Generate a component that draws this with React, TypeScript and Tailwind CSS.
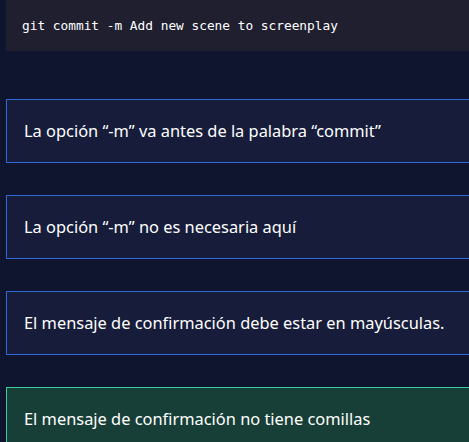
const OPTIONS = [
  { text: 'La opción “-m” va antes de la palabra “commit”', correct: false },
  { text: 'La opción “-m” no es necesaria aquí', correct: false },
  { text: 'El mensaje de confirmación debe estar en mayúsculas.', correct: false },
  { text: 'El mensaje de confirmación no tiene comillas', correct: true },
];

export default function App() {
  return (
    <div className="min-h-screen w-full overflow-hidden bg-[#10152f] pl-[6px]">
      <div className="w-[600px] h-[51px] bg-[#201f30] pl-4 flex items-center">
        <code className="font-['DejaVu_Sans_Mono',monospace] text-[12.8px] text-white">
          git commit -m Add new scene to screenplay
        </code>
      </div>
      <div className="mt-12 flex flex-col gap-8">
        {OPTIONS.map((opt) => (
          <button
            key={opt.text}
            className={
              opt.correct
                ? 'w-[600px] h-16 text-left border border-[#3ec99c] bg-[#173f37] pl-[17px] flex items-center'
                : 'w-[600px] h-16 text-left border border-[#2e69d4] bg-[#161c3a] pl-[17px] flex items-center'
            }
          >
            <span className="font-['Noto_Sans',sans-serif] text-[16.4px] text-white">{opt.text}</span>
          </button>
        ))}
      </div>
    </div>
  );
}
